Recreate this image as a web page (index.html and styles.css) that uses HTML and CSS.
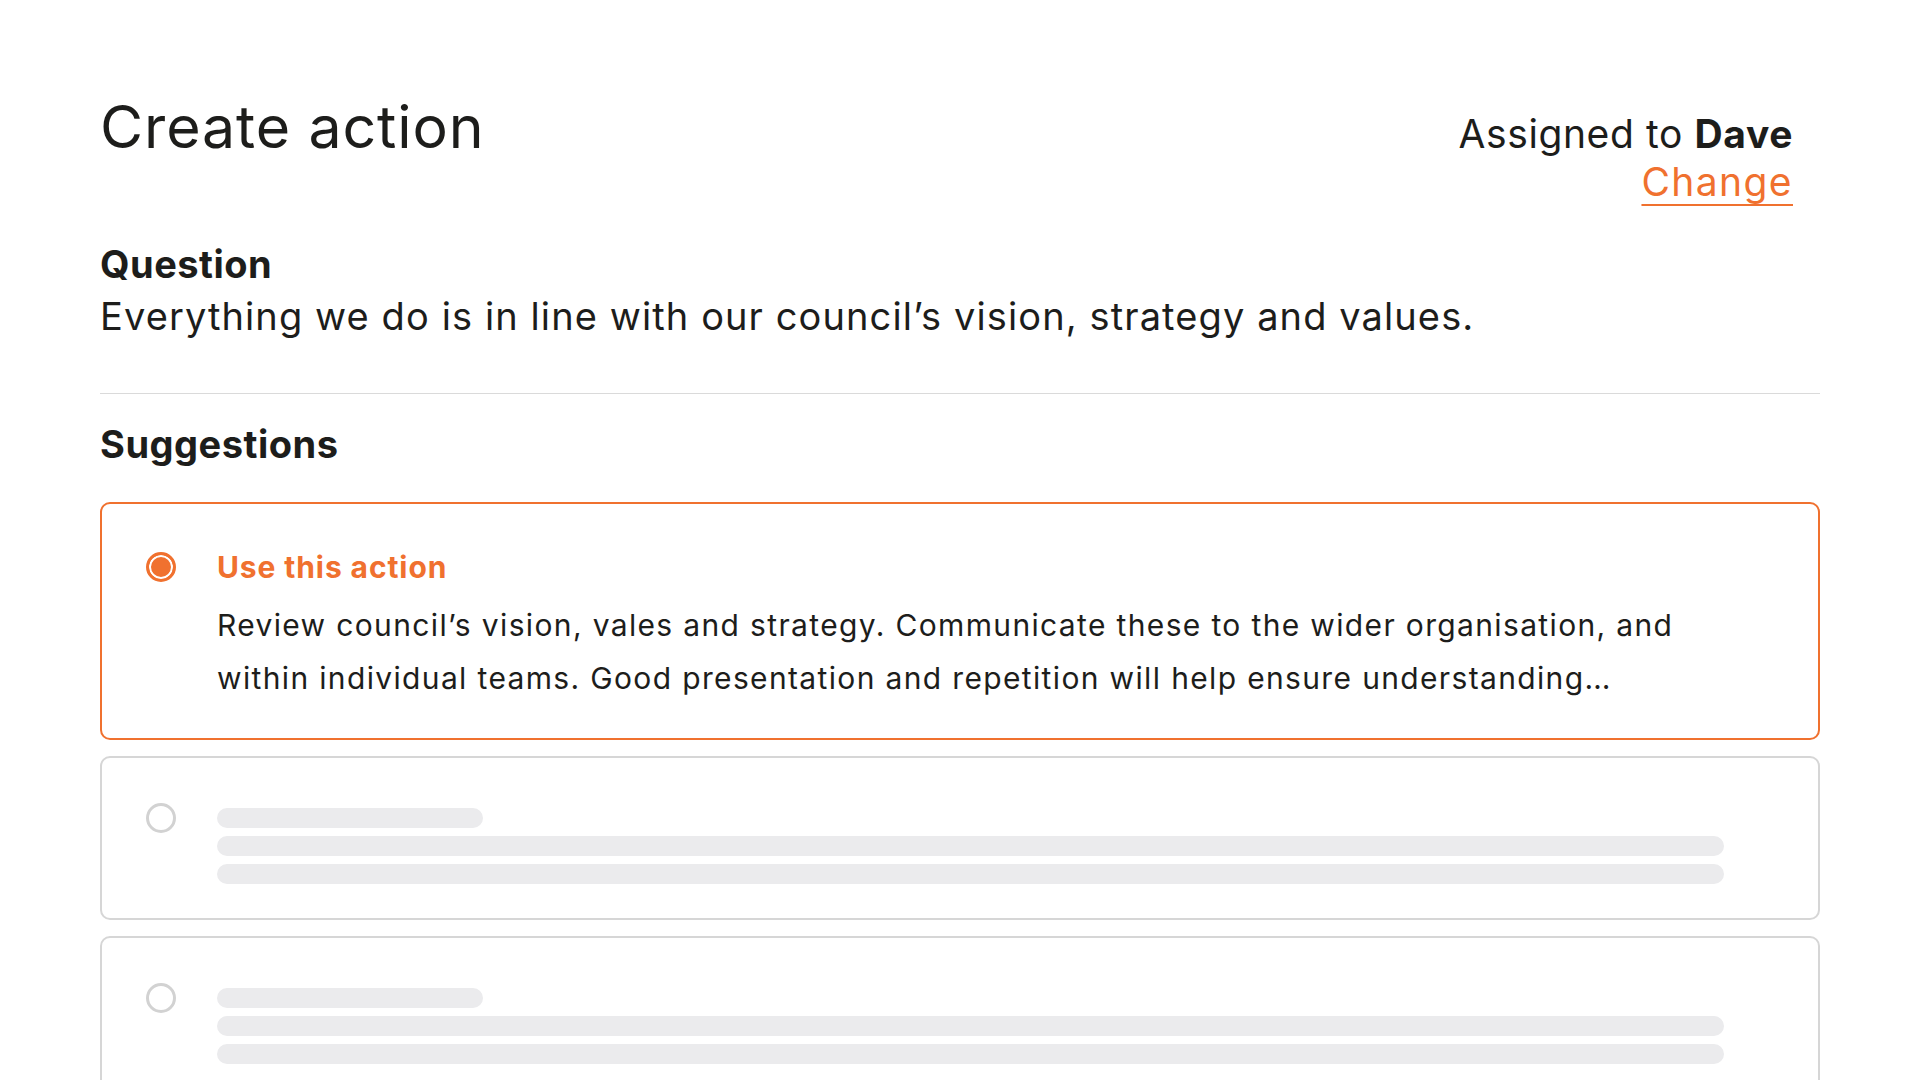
FILE: index.html
```html
<!DOCTYPE html>
<html lang="en">
<head>
<meta charset="utf-8">
<title>Create action</title>
<link rel="stylesheet" href="styles.css">
</head>
<body>
<main class="page">
  <header class="page-header">
    <h1 class="page-title">Create action</h1>
    <div class="assignee">
      <div class="assignee-line">Assigned to <strong>Dave</strong></div>
      <a class="assignee-change" href="#">Change</a>
    </div>
  </header>

  <section class="question">
    <h2 class="section-title">Question</h2>
    <p class="question-text">Everything we do is in line with our council’s vision, strategy and values.</p>
  </section>

  <hr class="divider">

  <section class="suggestions">
    <h2 class="section-title suggestions-title">Suggestions</h2>

    <div class="card card-selected">
      <span class="radio radio-on"></span>
      <div class="card-body">
        <div class="card-title">Use this action</div>
        <p class="card-text">Review council’s vision, vales and strategy. Communicate these to the wider organisation, and within individual teams. Good presentation and repetition will help ensure understanding…</p>
      </div>
    </div>

    <div class="card card-skeleton">
      <span class="radio radio-off"></span>
      <div class="card-body skeleton-lines">
        <span class="bar bar-short"></span>
        <span class="bar"></span>
        <span class="bar"></span>
      </div>
    </div>

    <div class="card card-skeleton">
      <span class="radio radio-off"></span>
      <div class="card-body skeleton-lines">
        <span class="bar bar-short"></span>
        <span class="bar"></span>
        <span class="bar"></span>
      </div>
    </div>
  </section>
</main>
</body>
</html>
```

FILE: styles.css
```css
* { box-sizing: border-box; }

html, body {
  margin: 0;
  padding: 0;
  background: #ffffff;
}

body {
  font-family: Inter, "Noto Sans", "DejaVu Sans", sans-serif;
  color: #1d1d1b;
}

.page {
  padding: 95px 100px 0 100px;
}

.page-header {
  display: flex;
  justify-content: space-between;
  align-items: flex-start;
}

.page-title {
  margin: 0;
  font-size: 59px;
  line-height: 64px;
  font-weight: 400;
  letter-spacing: 0.9px;
}

.assignee {
  margin-top: 15px;
  margin-right: 27px;
  text-align: right;
  font-size: 39px;
  line-height: 48px;
  letter-spacing: 0.6px;
}

.assignee-line strong {
  font-weight: 700;
}

.assignee-change {
  color: #f0712f;
  letter-spacing: 1.4px;
  text-decoration: underline;
  text-decoration-thickness: 2px;
  text-underline-offset: 8px;
}

.question {
  margin-top: 34px;
}

.section-title {
  margin: 0;
  font-size: 38px;
  line-height: 48px;
  font-weight: 700;
  letter-spacing: 0.5px;
}

.question-text {
  margin: 0;
  font-size: 38px;
  line-height: 56px;
  font-weight: 400;
  letter-spacing: 1.1px;
}

.divider {
  margin: 49px 0 0 0;
  border: 0;
  height: 1px;
  background: #dadada;
}

.suggestions-title {
  margin-top: 26px;
  margin-bottom: 34px;
}

.card {
  display: grid;
  grid-template-columns: 30px 1fr;
  column-gap: 41px;
  border: 2px solid #d6d6d6;
  border-radius: 10px;
  padding: 45px 94px 33px 44px;
  margin-bottom: 16px;
}

.card-selected {
  border-color: #f0712f;
}

.card-skeleton {
  padding-top: 50px;
  padding-bottom: 34px;
}

.radio {
  display: block;
  width: 30px;
  height: 30px;
  border-radius: 50%;
}

.radio-on {
  margin-top: 3px;
  background: #f0712f;
  border: 3px solid #f0712f;
  box-shadow: inset 0 0 0 2px #ffffff;
}

.radio-off {
  margin-top: -5px;
  border: 3px solid #d2d2d2;
  background: #ffffff;
}

.card-title {
  color: #f0712f;
  font-size: 30px;
  line-height: 36px;
  font-weight: 700;
  letter-spacing: 0.9px;
}

.card-text {
  margin: 14px 0 0 0;
  font-size: 30px;
  line-height: 53px;
  letter-spacing: 1.35px;
}

.skeleton-lines {
  display: flex;
  flex-direction: column;
  gap: 8px;
}

.bar {
  display: block;
  height: 20px;
  border-radius: 10px;
  background: #ebebed;
}

.bar-short {
  width: 266px;
}
```
